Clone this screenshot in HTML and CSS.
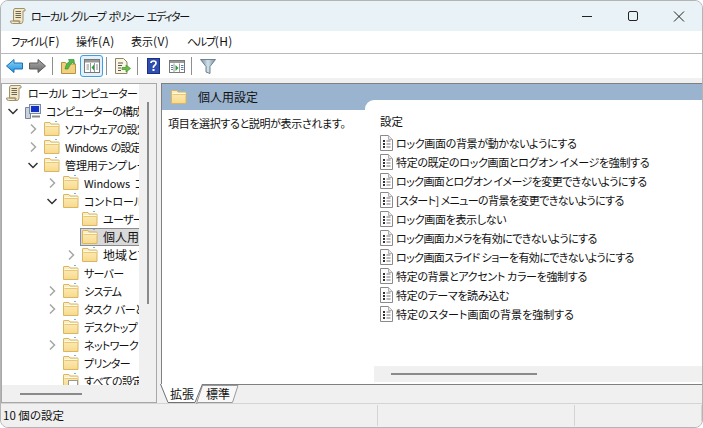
FILE: index.html
```html
<!DOCTYPE html>
<html lang="ja">
<head>
<meta charset="utf-8">
<title>ローカル グループ ポリシー エディター</title>
<link rel="stylesheet" href="styles.css">
</head>
<body>
<svg class="defs" width="0" height="0">
<defs>
<linearGradient id="gblue" x1="0" y1="0" x2="0" y2="1"><stop offset="0" stop-color="#8fd4fa"/><stop offset="1" stop-color="#1f8fdc"/></linearGradient>
<linearGradient id="ggrey" x1="0" y1="0" x2="0" y2="1"><stop offset="0" stop-color="#b0b0b0"/><stop offset="1" stop-color="#666"/></linearGradient>
<linearGradient id="gfold" x1="0" y1="0" x2="0" y2="1"><stop offset="0" stop-color="#fdf0c4"/><stop offset="1" stop-color="#f8d98a"/></linearGradient>
<linearGradient id="gfilt" x1="0" y1="0" x2="1" y2="0"><stop offset="0" stop-color="#6f8c9e"/><stop offset=".5" stop-color="#d5e1e8"/><stop offset="1" stop-color="#6f8c9e"/></linearGradient>
<symbol id="folder" viewBox="0 0 16 16">
<path d="M.5 14.500V2q0-.5.500-.5h5l1 1.500h7.500q.5 0 .5.500v11z" fill="url(#gfold)" stroke="#d8b662"/>
<path d="M1.500 5.500h13" stroke="#e6c878"/>
<path d="M1.500 4.500h13" stroke="#fffbe8"/>
<path d="M11 .5h2" stroke="#6fb6e6"/>
</symbol>
<symbol id="scroll" viewBox="0 0 16 16">
<path d="M5 .5h9q1.500 0 1 2.500h-2v9.500q0 3-2 3H2.500q-2 0-2-2.500H9v1.500q1.500.5 1-1.500H3.500V3Q3.500.5 5 .5z" fill="#f4e8c4" stroke="#9c9070"/>
<path d="M5.500 3.500h5.500M5.500 5.500h5.500M5.500 7.500h5.500M5.500 9.500h5.500" stroke="#6d675a"/>
</symbol>
<symbol id="doc" viewBox="0 0 13 16">
<path d="M.5.500h8l4 4v11H.5z" fill="#fdfdfd" stroke="#8a8a8a"/>
<path d="M8.500.500v4h4" fill="#e8e8e8" stroke="#b0b0b0"/>
<path d="M3 5h2v2H3zM3 8h2v2H3zM3 11h2v2H3z" fill="#333"/>
<path d="M6.500 6h4M6.500 9h4M6.500 12h4" stroke="#777"/>
</symbol>
<symbol id="chev-r" viewBox="0 0 10 10"><path d="M3 .5l4.500 4.500L3 9.500" fill="none" stroke="#a6a6a6" stroke-width="1.500"/></symbol>
<symbol id="chev-d" viewBox="0 0 10 10"><path d="M.5 3l4.500 4.500L9.500 3" fill="none" stroke="#333" stroke-width="1.500"/></symbol>
</defs>
</svg>
<div class="window">
  <header class="titlebar">
    <svg class="ico16" viewBox="0 0 16 16"><use href="#scroll"/></svg>
    <span class="title">ローカル グループ ポリシー エディター</span>
    <div class="wctl">
      <svg width="46" height="31" viewBox="0 0 46 31"><path d="M18 15.500h10" stroke="#222"/></svg>
      <svg width="46" height="31" viewBox="0 0 46 31"><rect x="18.500" y="10.500" width="9" height="9" rx="1.500" fill="none" stroke="#222"/></svg>
      <svg width="46" height="31" viewBox="0 0 46 31"><path d="M18 10.500l10 10M28 10.500l-10 10" stroke="#222"/></svg>
    </div>
  </header>
  <nav class="menubar">
    <span class="m1">ファイル<b>(F)</b></span><span class="m2">操作<b>(A)</b></span><span class="m3">表示<b>(V)</b></span><span class="m4">ヘルプ<b>(H)</b></span>
  </nav>
  <div class="toolbar">
    <span class="tb"><svg width="17" height="14" viewBox="0 0 17 14"><path d="M8 .5L.5 7 8 13.500V10h8.500V4H8z" fill="url(#gblue)" stroke="#1c6fb5"/></svg></span>
    <span class="tb"><svg width="17" height="14" viewBox="0 0 17 14"><path d="M9 .5L16.500 7 9 13.500V10H.5V4H9z" fill="url(#ggrey)" stroke="#5c5c5c"/></svg></span>
    <i class="sep"></i>
    <span class="tb"><svg width="15" height="16" viewBox="0 0 15 16"><path d="M.5 15.500V4.500h4l1 1.500h9v9.500z" fill="#f2d07f" stroke="#b5933f"/><path d="M4 11Q5 5 8.500 3.500L7.500 1.500h5.500l.5 4.500-2-1.500Q9 6 7 11z" fill="#54b848" stroke="#2f8a2a" stroke-width=".6"/></svg></span>
    <span class="tb active"><svg width="16" height="14" viewBox="0 0 16 14"><rect x=".5" y=".5" width="15" height="13" fill="#fff" stroke="#777"/><path d="M1 1h14v2.500H1z" fill="#9a9a9a"/><path d="M6.500 4v9M10.500 4v9" stroke="#999"/><path d="M2.500 6h2.500M2.500 8h2.500M2.500 10h2.500M12 6h2M12 8h2M12 10h2" stroke="#888"/><path d="M10 5.500L7.500 8.500 10 11.500z" fill="#2f9a3c"/></svg></span>
    <i class="sep"></i>
    <span class="tb"><svg width="16" height="16" viewBox="0 0 16 16"><path d="M.5.500h8l3.500 3.500v11.500H.5z" fill="#fbf6e2" stroke="#8a8468"/><path d="M3 5h5M3 7.500h4M3 10h3M3 12.500h3" stroke="#555"/><path d="M7 9.500h4V7l4.500 3.500L11 14v-2.500H7z" fill="#6cc04a" stroke="#3d8f2b" stroke-width=".7"/></svg></span>
    <i class="sep"></i>
    <span class="tb"><svg width="13" height="16" viewBox="0 0 13 16"><rect x=".5" y=".5" width="12" height="15" fill="#2f4fb0" stroke="#1a2f80"/><path d="M4 5q0-2 2.500-2T9 5Q9 6.500 7.500 7.500T6.500 10" fill="none" stroke="#fff" stroke-width="1.700"/><path d="M5.500 11h2v2h-2z" fill="#fff"/></svg></span>
    <span class="tb"><svg width="16" height="13" viewBox="0 0 16 13"><rect x=".5" y=".5" width="15" height="12" fill="#fff" stroke="#777"/><path d="M1 1h14v2H1z" fill="#9a9a9a"/><path d="M5 3.500v9M10.500 3.500v9" stroke="#999"/><path d="M2 5.500h2M2 7.500h2M2 9.500h2M12 5.500h2.500M12 7.500h2.500M12 9.500h2.500" stroke="#5b7fb0"/><path d="M6.500 5l3 3-3 3z" fill="#2f9a3c"/></svg></span>
    <i class="sep"></i>
    <span class="tb"><svg width="16" height="15" viewBox="0 0 16 15"><path d="M.5.500h15L10 7.500v7L6 13V7.500z" fill="url(#gfilt)" stroke="#6b8494"/></svg></span>
  </div>
  <main class="panes">
    <section class="tree">
      <div class="tree-scroll">
        <div class="rows">
          <div class="row top"><svg class="ico16" viewBox="0 0 16 16"><use href="#scroll"/></svg><span>ローカル コンピューター ポリシー</span></div>
          <div class="row l0"><svg class="chev" viewBox="0 0 10 10"><use href="#chev-d"/></svg><svg class="ico16" viewBox="0 0 16 16"><path d="M.5 4.500h5v11h-5z" fill="#c9d1dc" stroke="#78829a"/><rect x="4.500" y="1.500" width="11" height="9" fill="#dfe9f5" stroke="#7d8aa0"/><rect x="6" y="3" width="8" height="6" fill="#1433c4"/><path d="M7 13.500h8" stroke="#888" stroke-width="2"/></svg><span>コンピューターの構成</span></div>
          <div class="row l1"><svg class="chev" viewBox="0 0 10 10"><use href="#chev-r"/></svg><svg class="ico16" viewBox="0 0 16 16"><use href="#folder"/></svg><span>ソフトウェアの設定</span></div>
          <div class="row l1"><svg class="chev" viewBox="0 0 10 10"><use href="#chev-r"/></svg><svg class="ico16" viewBox="0 0 16 16"><use href="#folder"/></svg><span>Windows の設定</span></div>
          <div class="row l1"><svg class="chev" viewBox="0 0 10 10"><use href="#chev-d"/></svg><svg class="ico16" viewBox="0 0 16 16"><use href="#folder"/></svg><span class="wide">管理用テンプレート</span></div>
          <div class="row l2"><svg class="chev" viewBox="0 0 10 10"><use href="#chev-r"/></svg><svg class="ico16" viewBox="0 0 16 16"><use href="#folder"/></svg><span class="wide">Windows コンポーネント</span></div>
          <div class="row l2"><svg class="chev" viewBox="0 0 10 10"><use href="#chev-d"/></svg><svg class="ico16" viewBox="0 0 16 16"><use href="#folder"/></svg><span class="wide">コントロール パネル</span></div>
          <div class="row l3"><i class="nochev"></i><svg class="ico16" viewBox="0 0 16 16"><use href="#folder"/></svg><span>ユーザー補助</span></div>
          <div class="row l3"><i class="nochev"></i><div class="selbox"><svg class="ico16" viewBox="0 0 16 16"><use href="#folder"/></svg><span class="kanji">個人用設定</span></div></div>
          <div class="row l3"><svg class="chev" viewBox="0 0 10 10"><use href="#chev-r"/></svg><svg class="ico16" viewBox="0 0 16 16"><use href="#folder"/></svg><span class="kanji">地域と言語</span></div>
          <div class="row l2"><i class="nochev"></i><svg class="ico16" viewBox="0 0 16 16"><use href="#folder"/></svg><span>サーバー</span></div>
          <div class="row l2"><svg class="chev" viewBox="0 0 10 10"><use href="#chev-r"/></svg><svg class="ico16" viewBox="0 0 16 16"><use href="#folder"/></svg><span>システム</span></div>
          <div class="row l2"><svg class="chev" viewBox="0 0 10 10"><use href="#chev-r"/></svg><svg class="ico16" viewBox="0 0 16 16"><use href="#folder"/></svg><span>タスク バーと</span></div>
          <div class="row l2"><i class="nochev"></i><svg class="ico16" viewBox="0 0 16 16"><use href="#folder"/></svg><span>デスクトップ</span></div>
          <div class="row l2"><svg class="chev" viewBox="0 0 10 10"><use href="#chev-r"/></svg><svg class="ico16" viewBox="0 0 16 16"><use href="#folder"/></svg><span>ネットワーク</span></div>
          <div class="row l2"><i class="nochev"></i><svg class="ico16" viewBox="0 0 16 16"><use href="#folder"/></svg><span>プリンター</span></div>
          <div class="row l2"><i class="nochev"></i><svg class="ico16" viewBox="0 0 16 16"><use href="#folder"/><rect x="5.500" y="7.500" width="9" height="8" fill="#fff" stroke="#999"/></svg><span>すべての設定</span></div>
        </div>
        <div class="vbar"><i></i></div>
      </div>
      <div class="hbar tree-h"><i></i></div>
    </section>
    <section class="detail">
      <div class="detail-box">
        <div class="left">
          <div class="head"><svg class="ico16" viewBox="0 0 16 16"><use href="#folder"/></svg><span>個人用設定</span></div>
          <div class="desc">項目を選択すると説明が表示されます。</div>
        </div>
        <div class="right">
          <div class="list">
            <div class="list-main">
              <div class="col">設定</div>
              <div class="item"><svg viewBox="0 0 13 16"><use href="#doc"/></svg><span>ロック画面の背景が動かないようにする</span></div>
              <div class="item"><svg viewBox="0 0 13 16"><use href="#doc"/></svg><span>特定の既定のロック画面とログオン イメージを強制する</span></div>
              <div class="item"><svg viewBox="0 0 13 16"><use href="#doc"/></svg><span class="tight">ロック画面とログオン イメージを変更できないようにする</span></div>
              <div class="item"><svg viewBox="0 0 13 16"><use href="#doc"/></svg><span class="tight">[スタート] メニューの背景を変更できないようにする</span></div>
              <div class="item"><svg viewBox="0 0 13 16"><use href="#doc"/></svg><span>ロック画面を表示しない</span></div>
              <div class="item"><svg viewBox="0 0 13 16"><use href="#doc"/></svg><span class="tight">ロック画面カメラを有効にできないようにする</span></div>
              <div class="item"><svg viewBox="0 0 13 16"><use href="#doc"/></svg><span class="tight">ロック画面スライド ショーを有効にできないようにする</span></div>
              <div class="item"><svg viewBox="0 0 13 16"><use href="#doc"/></svg><span>特定の背景とアクセント カラーを強制する</span></div>
              <div class="item"><svg viewBox="0 0 13 16"><use href="#doc"/></svg><span>特定のテーマを読み込む</span></div>
              <div class="item"><svg viewBox="0 0 13 16"><use href="#doc"/></svg><span class="loose">特定のスタート画面の背景を強制する</span></div>
            </div>
            <div class="hbar list-h"><i></i></div>
          </div>
        </div>
      </div>
      <div class="tabs">
        <svg class="tabshape" width="82" height="20" viewBox="0 0 82 20">
          <path d="M36.500 19.500L42.500 1.500H78L72.500 18.500H38z" fill="#f8f8f8" stroke="#9a9a9a"/>
          <path d="M.5 0L8 18.500H35L42.500 0z" fill="#fff"/>
          <path d="M.5 0L8 18.500H35L42.500 0" fill="none" stroke="#707070"/>
        </svg>
        <span class="tab">拡張</span><span class="tab">標準</span>
      </div>
    </section>
  </main>
  <footer class="status">
    <span class="s1">10 個の設定</span><span class="s2"></span><span class="s3"></span>
  </footer>
</div>
</body>
</html>
```
FILE: styles.css
```css
* { box-sizing: border-box; }
html, body { margin: 0; height: 100%; background: #fff; }
body { font: 11px/18px "Noto Sans CJK JP", "Noto Sans", sans-serif; font-feature-settings: "palt"; letter-spacing: -.33px; color: #111; overflow: hidden; }
.defs { display: block; height: 0; }
svg { display: block; flex: none; }
.ico16 { width: 16px; height: 16px; }

.window { width: 703px; height: 428px; display: flex; flex-direction: column; background: #f0f0f0; border: 1px solid #b4b4b4; border-radius: 8px; overflow: hidden; }

.titlebar { height: 30px; flex: none; display: flex; align-items: center; background: #e9f2f7; padding-left: 9px; }
.titlebar .title { margin-left: 5px; flex: 1; letter-spacing: -1.4px; word-spacing: 2px; }
.wctl { display: flex; }

.menubar { height: 23px; flex: none; display: flex; align-items: center; padding: 0 0 2px 10px; background: #fff; border-bottom: 1px solid #b9b9b9; }
.menubar b { font-weight: 400; font-size: 12px; letter-spacing: .4px; }
.m1 { width: 65px; letter-spacing: -1.3px; }
.m2 { width: 55px; letter-spacing: 0; }
.m3 { width: 56px; letter-spacing: 0; }
.m4 { letter-spacing: -1.3px; }

.toolbar { height: 24px; flex: none; display: flex; align-items: center; padding-left: 2px; background: #fff; }
.tb { width: 23px; height: 22px; display: flex; align-items: center; justify-content: center; border: 1px solid transparent; border-radius: 3px; }
.tb.active { background: #e3f1fb; border-color: #3f9fe0; }
.sep { width: 1px; height: 18px; background: #8f8f8f; margin: 0 4px 0 3px; }

.panes { flex: 1; min-height: 0; display: flex; gap: 4px; padding-top: 5px; background: #f0f0f0; }

.tree { width: 156px; flex: none; display: flex; flex-direction: column; background: #fff; border: 1px solid #a8a8a8; }
.tree-scroll { flex: 1; min-height: 0; display: flex; }
.rows { flex: 1; min-width: 0; overflow: hidden; padding-left: 6px; }
.row { height: 18px; display: flex; align-items: center; white-space: nowrap; overflow: hidden; }
.row span { margin-left: 5px; letter-spacing: -.7px; word-spacing: 2px; }
.row .wide { letter-spacing: -.1px; }
.row .kanji { font-size: 12px; letter-spacing: 0; }
.row .chev, .nochev { width: 10px; height: 10px; flex: none; margin-right: 6px; }
.top { margin-left: -2px; }
.top span { margin-left: 6px; }
.l0 .chev { margin-right: 7px; }
.l1 { padding-left: 20px; }
.l2 { padding-left: 39px; }
.l3 { padding-left: 58px; }
.selbox { flex: 1; min-width: 0; height: 18px; display: flex; align-items: center; margin-left: -2px; padding-left: 1px; background: #d9d9d9; border: 1px solid #8c8c8c; border-right: 0; overflow: hidden; }
.vbar { width: 17px; flex: none; background: #f0f0f0; display: flex; justify-content: center; }
.vbar i { width: 2px; height: 202px; margin-top: 18px; background: #8a8a8a; }
.hbar { flex: none; background: #f0f0f0; display: flex; align-items: center; }
.hbar i { display: block; height: 2px; background: #8a8a8a; }
.tree-h { height: 17px; }
.tree-h i { width: 62px; margin-left: 18px; }

.detail { flex: 1; min-width: 0; display: flex; flex-direction: column; }
.detail-box { flex: 1; min-height: 0; display: flex; background: #fff; border: 1px solid #808080; border-right: 0; }
.left { width: 203px; flex: none; display: flex; flex-direction: column; }
.head { height: 26px; flex: none; display: flex; align-items: center; gap: 11px; padding-left: 9px; background: #9ab3cf; font-size: 12px; letter-spacing: 0; }
.desc { padding: 4px 0 0 6px; white-space: nowrap; letter-spacing: -.35px; }
.right { flex: 1; min-width: 0; display: flex; padding-top: 16px; background: linear-gradient(#9ab3cf 26px, #fff 26px); }
.list { flex: 1; min-width: 0; display: flex; flex-direction: column; background: #fff; border-radius: 9px 0 0 0; padding-bottom: 2px; }
.list-main { flex: 1; min-height: 0; padding: 12px 0 0 15px; }
.col { height: 21px; font-size: 11.5px; letter-spacing: 0; }
.item { height: 19px; display: flex; align-items: center; gap: 3px; white-space: nowrap; }
.item svg { width: 13px; height: 16px; }
.tight { letter-spacing: -.6px; }
.loose { letter-spacing: 0; }
.list-h { height: 16px; margin-left: 9px; }
.list-h i { width: 146px; margin-left: 17px; }

.tabs { position: relative; height: 18px; flex: none; display: flex; padding-left: 9px; line-height: 18px; font-size: 12px; letter-spacing: 0; }
.tabshape { position: absolute; left: -1px; top: -1px; }
.tab { position: relative; }
.tab + .tab { margin-left: 12px; }

.status { height: 24px; flex: none; display: flex; align-items: center; background: #f0f0f0; border-top: 1px solid #d4d4d4; font-size: 11.5px; letter-spacing: 0; }
.status span { height: 21px; line-height: 20px; border-right: 1px solid #d4d4d4; }
.s1 { width: 377px; padding-left: 2px; }
.s2 { width: 197px; }
.s3 { flex: 1; }
```
